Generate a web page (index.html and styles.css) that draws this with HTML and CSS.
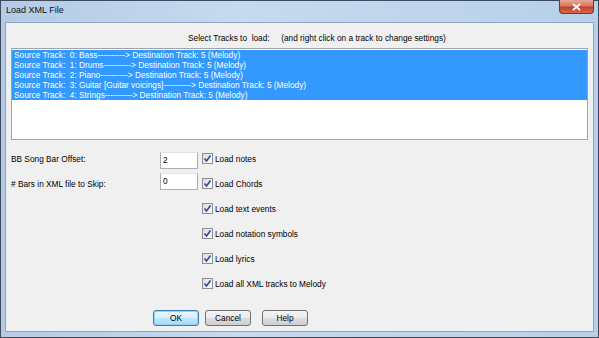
FILE: index.html
```html
<!DOCTYPE html>
<html lang="en">
<head>
    <meta charset="UTF-8">
    <title>Load XML File</title>
    <link rel="stylesheet" href="styles.css">
</head>
<body>
    <div class="window">
        <div class="titlebar">
            <span class="title">Load XML File</span>
            <span class="close">
                <svg width="9" height="8" viewBox="0 0 9 8"><path d="M1 1 L8 7 M8 1 L1 7" stroke="#fff" stroke-width="1.8" /></svg>
            </span>
        </div>
        <div class="client">
            <div class="prompt">Select Tracks to&nbsp; load:&nbsp;&nbsp;&nbsp;&nbsp; (and right click on a track to change settings)</div>

            <ul class="tracks">
                <li class="selected">Source Track:&nbsp; 0: Bass----------&gt; Destination Track: 5 (Melody)</li>
                <li class="selected">Source Track:&nbsp; 1: Drums----------&gt; Destination Track: 5 (Melody)</li>
                <li class="selected">Source Track:&nbsp; 2: Piano----------&gt; Destination Track: 5 (Melody)</li>
                <li class="selected">Source Track:&nbsp; 3: Guitar [Guitar voicings]----------&gt; Destination Track: 5 (Melody)</li>
                <li class="selected">Source Track:&nbsp; 4: Strings----------&gt; Destination Track: 5 (Melody)</li>
            </ul>

            <div class="options">
                <div class="fields">
                    <div class="field">
                        <span class="field-label">BB Song Bar Offset:</span>
                        <span class="input first">2</span>
                    </div>
                    <div class="field">
                        <span class="field-label"># Bars in XML file to Skip:</span>
                        <span class="input second">0</span>
                    </div>
                </div>
                <div class="checks">
                    <div class="check"><span class="box"><svg width="9" height="9" viewBox="0 0 9 9"><path d="M1.5 4.5 L3.5 7 L7.5 1.5" fill="none" stroke="#2a4a9a" stroke-width="1.6" /></svg></span>Load notes</div>
                    <div class="check"><span class="box"><svg width="9" height="9" viewBox="0 0 9 9"><path d="M1.5 4.5 L3.5 7 L7.5 1.5" fill="none" stroke="#2a4a9a" stroke-width="1.6" /></svg></span>Load Chords</div>
                    <div class="check"><span class="box"><svg width="9" height="9" viewBox="0 0 9 9"><path d="M1.5 4.5 L3.5 7 L7.5 1.5" fill="none" stroke="#2a4a9a" stroke-width="1.6" /></svg></span>Load text events</div>
                    <div class="check"><span class="box"><svg width="9" height="9" viewBox="0 0 9 9"><path d="M1.5 4.5 L3.5 7 L7.5 1.5" fill="none" stroke="#2a4a9a" stroke-width="1.6" /></svg></span>Load notation symbols</div>
                    <div class="check"><span class="box"><svg width="9" height="9" viewBox="0 0 9 9"><path d="M1.5 4.5 L3.5 7 L7.5 1.5" fill="none" stroke="#2a4a9a" stroke-width="1.6" /></svg></span>Load lyrics</div>
                    <div class="check"><span class="box"><svg width="9" height="9" viewBox="0 0 9 9"><path d="M1.5 4.5 L3.5 7 L7.5 1.5" fill="none" stroke="#2a4a9a" stroke-width="1.6" /></svg></span>Load all XML tracks to Melody</div>
                </div>
            </div>

            <div class="buttons">
                <button class="btn default" type="button">OK</button>
                <button class="btn" type="button">Cancel</button>
                <button class="btn help" type="button">Help</button>
            </div>
        </div>
    </div>
</body>
</html>
```

FILE: styles.css
```css
/* dialog window */
body {
    margin: 0;
    font-family: "Liberation Sans", Arial, sans-serif;
    font-size: 8.3px;
    color: #000;
}
.window {
    width: 599px;
    height: 338px;
    box-sizing: border-box;
    border: 1px solid #3c4a5c;
    background: linear-gradient(to right, #b3cbe6, #c6daf0 40%, #b7d0ea);
    display: flex;
    flex-direction: column;
}

/* title bar */
.titlebar {
    height: 21px;
    display: flex;
    align-items: flex-start;
    justify-content: space-between;
    padding-left: 5px;
    padding-right: 4px;
}
.title {
    font-size: 9px;
    line-height: 19px;
    color: #111;
}
.close {
    width: 35px;
    height: 14px;
    box-sizing: border-box;
    margin-top: -1px;
    border: 1px solid #7a3526;
    border-top: none;
    border-radius: 0 0 4px 4px;
    background: linear-gradient(to bottom, #e9a795, #d77a62 45%, #c1412a 55%, #d6694c);
    display: flex;
    align-items: center;
    justify-content: center;
}

/* client area */
.client {
    flex: 1;
    margin: 0 4px 5px 4px;
    border: 1px solid #8ea7c4;
    background: #f0f0f0;
    padding: 9px 5px 0 5px;
}
.prompt {
    line-height: 12px;
    padding-left: 177px;
}
.tracks {
    list-style: none;
    margin: 4px 0 0 0;
    height: 92px;
    box-sizing: border-box;
    border: 1px solid #a0a4aa;
    background: #fff;
    padding: 1px 0 0 0;
}
.tracks li {
    height: 10px;
    line-height: 10px;
    padding-left: 2px;
    white-space: nowrap;
}
.tracks li.selected {
    background: #3399ff;
    color: #fff;
}

/* fields and check boxes */
.options {
    display: flex;
    margin-top: 6px;
}
.fields {
    width: 191px;
}
.field {
    height: 25px;
    display: flex;
    align-items: center;
}
.field-label {
    width: 149px;
}
.input {
    width: 38px;
    height: 17px;
    box-sizing: border-box;
    border: 1px solid #abadb3;
    border-top-color: #e2e3ea;
    background: #fff;
    padding-left: 2px;
    line-height: 15px;
}
.input.first {
    margin-top: 3px;
}
.input.second {
    margin-top: -5px;
}
.checks {
    display: flex;
    flex-direction: column;
}
.check {
    height: 25px;
    display: flex;
    align-items: center;
    gap: 2px;
}
.box {
    width: 11px;
    height: 11px;
    box-sizing: border-box;
    border: 1px solid #8f8f8f;
    background: linear-gradient(135deg, #dcdcdc, #fbfbfb);
    display: flex;
    align-items: center;
    justify-content: center;
}

/* buttons */
.buttons {
    display: flex;
    gap: 6px;
    margin-top: 14px;
    padding-left: 142px;
}
.btn {
    width: 46px;
    height: 16px;
    padding: 0;
    font-family: inherit;
    font-size: 8.3px;
    color: #000;
    border: 1px solid #707070;
    border-radius: 3px;
    background: linear-gradient(to bottom, #f2f2f2, #ebebeb 50%, #dddddd 50%, #cfcfcf);
}
.btn.default {
    border-color: #3c7fb1;
    background: linear-gradient(to bottom, #eaf6fd, #d9f0fc 50%, #bee6fd 50%, #a7d9f5);
    box-shadow: inset 0 0 0 1px #8fd3f6;
}
.btn.help {
    margin-left: 5px;
}
```
